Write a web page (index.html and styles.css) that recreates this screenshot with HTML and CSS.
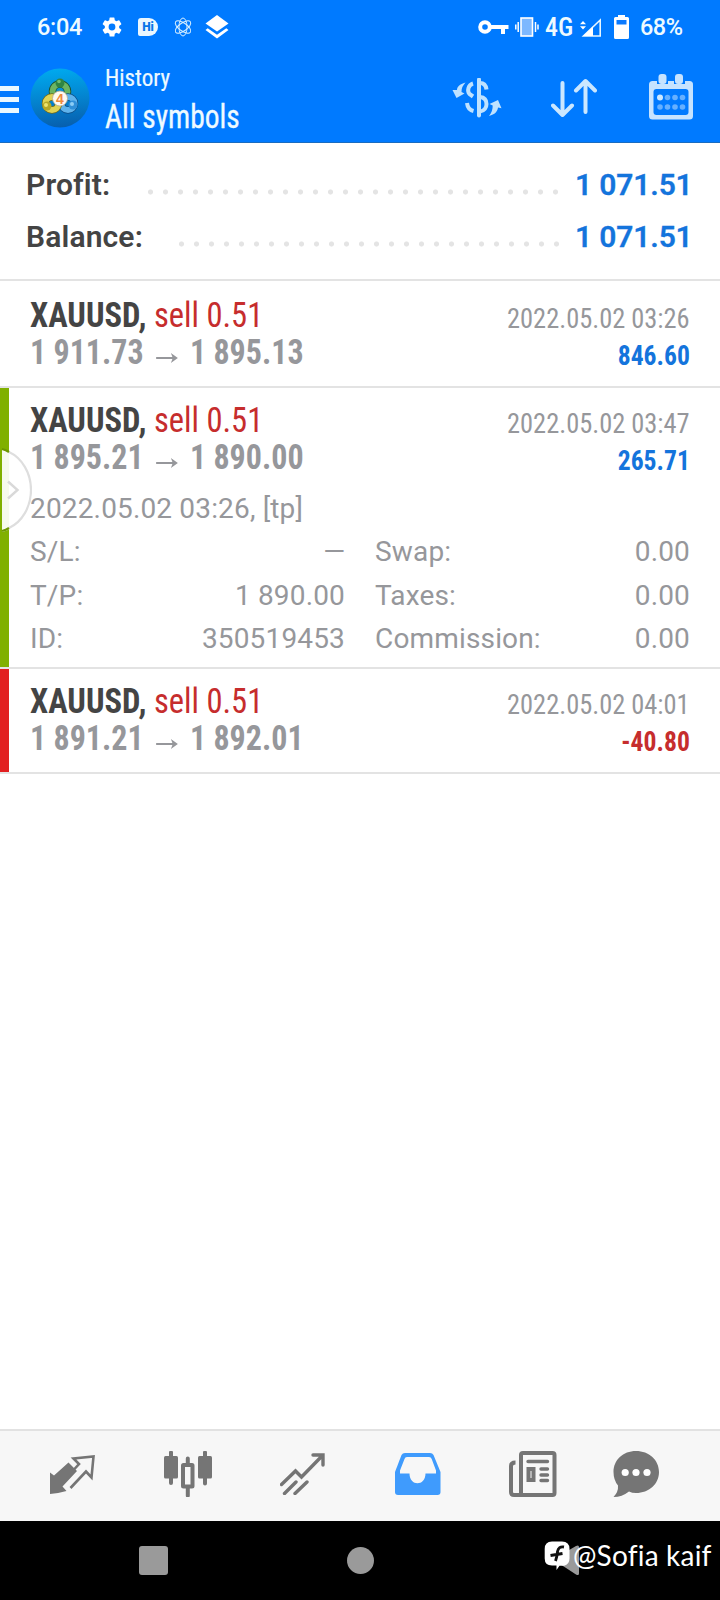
FILE: index.html
```html
<!DOCTYPE html>
<html lang="en">
<head>
<meta charset="utf-8">
<title>History</title>
<link rel="stylesheet" href="styles.css">
</head>
<body>
<div class="screen">
  <header class="top">
    <div class="status">
      <span class="clock">6:04</span>
      <svg class="st-gear" width="20" height="20" viewBox="2 2 20 20" fill="#fff"><path d="M19.14 12.94c.04-.3.06-.61.06-.94s-.02-.64-.07-.94l2.03-1.58a.49.49 0 0 0 .12-.61l-1.92-3.32a.49.49 0 0 0-.59-.22l-2.39.96a7 7 0 0 0-1.62-.94l-.36-2.54A.48.48 0 0 0 13.92 2.400h-3.84a.48.48 0 0 0-.48.41l-.36 2.54a7 7 0 0 0-1.62.94l-2.39-.96a.48.48 0 0 0-.59.22L2.740 8.870a.48.48 0 0 0 .12.61l2.03 1.580a6 6 0 0 0 0 1.880L2.860 14.520a.49.49 0 0 0-.12.61l1.920 3.320c.12.22.37.29.59.22l2.390-.96c.5.38 1.030.7 1.620.940l.36 2.540c.05.24.24.41.480.410h3.840c.24 0 .44-.17.47-.41l.36-2.540a7 7 0 0 0 1.620-.940l2.390.960c.22.08.47 0 .59-.22l1.920-3.320a.48.48 0 0 0-.12-.61zM12 15.400a3.400 3.400 0 1 1 0-6.800 3.400 3.400 0 0 1 0 6.800z"/></svg>
      <span class="st-hi">Hi</span>
      <svg class="st-atom" width="18" height="20" viewBox="0 0 18 20" fill="none" stroke="#d8f0ff" stroke-width="1"><ellipse cx="9" cy="10" rx="4" ry="9"/><ellipse cx="9" cy="10" rx="4" ry="9" transform="rotate(55 9 10)"/><ellipse cx="9" cy="10" rx="4" ry="9" transform="rotate(-55 9 10)"/></svg>
      <svg class="st-layers" width="24" height="24" viewBox="0 0 24 24" fill="#fff"><path d="M12 0 23.500 8.500 12 16.500.5 8.500z"/><path d="M2.700 13.300 12 19.700l9.300-6.400 2.200 1.700L12 23.500.5 15z"/></svg>
      <svg class="st-key" width="31" height="15" viewBox="0 0 31 15"><circle cx="7" cy="7" r="4.800" fill="none" stroke="#fff" stroke-width="4"/><path d="M12 5h18.500v4H27v5h-4V9H12z" fill="#fff"/></svg>
      <svg class="st-vib" width="24" height="20" viewBox="0 0 24 20"><rect x="6" y="1" width="11.500" height="18" fill="#7db8ff" stroke="#fff" stroke-width="1.600"/><path d="M3.200 5v10M.8 7.500v5M20.500 5v10M23 7.500v5" stroke="#fff" stroke-width="1.500"/></svg>
      <span class="net">4G</span>
      <svg class="st-sig" width="22" height="19" viewBox="0 0 22 19"><path d="M20.200 2v16H3.500z" fill="none" stroke="#e8f7ff" stroke-width="1.600"/><path d="M13 8.500V18H3z" fill="#fff"/><path d="M0 6.300 3 3l3 3.300zM0 8.300l3 3.300 3-3.300z" fill="#fff"/></svg>
      <svg class="st-bat" width="15" height="24" viewBox="0 0 15 24"><path d="M4 0h7v2h2.500Q15 2 15 3.500v19q0 1.500-1.500 1.500h-12Q0 24 0 22.500v-19Q0 2 1.500 2H4z" fill="#fff"/><path d="M2.500 5h10v4.500h-10z" fill="#0a7aff"/></svg>
      <span class="pct">68%</span>
    </div>
    <div class="appbar">
      <div class="burger"><i></i><i></i><i></i></div>
      <svg class="logo" width="60" height="60" viewBox="0 0 60 60">
        <defs>
          <linearGradient id="bg" x1=".5" y1="0" x2=".6" y2="1"><stop offset="0" stop-color="#00a9ee"/><stop offset=".55" stop-color="#0481cd"/><stop offset="1" stop-color="#075ead"/></linearGradient>
        </defs>
        <circle cx="30" cy="30" r="29.500" fill="url(#bg)"/>
        <g fill="none">
          <circle cx="30" cy="23.500" r="7.500" stroke="#1d4f2a" stroke-width="7.500"/><circle cx="30" cy="23.500" r="7.500" stroke="#6cb562" stroke-width="6"/>
          <circle cx="38" cy="35.500" r="6.500" stroke="#0b4c86" stroke-width="7.500"/><circle cx="38" cy="35.500" r="6.500" stroke="#5fb3ec" stroke-width="6"/>
          <circle cx="22" cy="35.500" r="6.500" stroke="#716a1c" stroke-width="7.500"/><circle cx="22" cy="35.500" r="6.500" stroke="#e0d355" stroke-width="6"/>
        </g>
        <circle cx="30" cy="15" r="4.500" fill="#2f8544"/><circle cx="29" cy="13.500" r="1.800" fill="#73bd71"/>
        <circle cx="17" cy="38" r="4.500" fill="#b7a827"/><circle cx="16" cy="37" r="2" fill="#efe36c"/>
        <circle cx="43" cy="37" r="4.500" fill="#2f8fd8"/><circle cx="42" cy="36" r="2" fill="#8ccdf5"/>
        <circle cx="30" cy="30.500" r="7.500" fill="#fffaf2" stroke="#b5a98e" stroke-width=".8"/>
        <text x="30" y="35.500" text-anchor="middle" class="logo-num">4</text>
      </svg>
      <div class="titles"><div class="t1">History</div><div class="t2">All symbols</div></div>
      <svg class="ic-dollar" width="50" height="40" viewBox="0 0 50 40" fill="none" stroke="#bfe2ff" stroke-width="4">
        <path d="M27 1.500v36" stroke-width="4" stroke-linecap="round"/>
        <path d="M21 5.500C16 7 15 13 17.500 16L21 18.500" />
        <path d="M28 5c3.500 0 6 2.500 6.500 6.500"/>
        <path d="M15 25c.5 4.500 2.500 7 6.500 8"/>
        <path d="M28 19c5 .5 6.500 3.500 6.500 7s-2 7-6.500 7.500"/>
        <path d="M13.500 4.500C7.500 6 5 9 5 12H.5l4 8 8-4.500-3-1.500c0-4 1-6 4-9.500z" fill="#bfe2ff" stroke="none"/>
        <path d="M37 38c6-1.500 8.500-4.500 9-8.500l3.500.8L46 22l-8.500 4 3.200 1.500c0 4-1 7-3.700 10.500z" fill="#bfe2ff" stroke="none"/>
      </svg>
      <svg class="ic-sort" width="46" height="40" viewBox="0 0 46 40" fill="none" stroke="#cbe7ff" stroke-width="4" stroke-linecap="round" stroke-linejoin="round"><path d="M11.500 5v32M2 27.500 11.500 37 21 27.500M34.500 34V3M25 12.500 34.500 3 44 12.500"/></svg>
      <svg class="ic-cal" width="44" height="46" viewBox="0 0 44 46"><rect y="7" width="44" height="38.500" rx="3.500" fill="#c6e3ff"/><path d="M8 0h11v10H8zM25 0h11v10H25z" fill="#007aff"/><rect x="9.500" y="0" width="8" height="10" rx="3" fill="#c6e3ff"/><rect x="26" y="0" width="8" height="10" rx="3" fill="#c6e3ff"/><rect x="4.500" y="15" width="35" height="26" rx="3" fill="#007aff"/><circle cx="11" cy="23.500" r="3" fill="#cde8ff"/><g fill="#66b0ff"><circle cx="18.500" cy="23.500" r="2.800"/><circle cx="26" cy="23.500" r="2.800"/><circle cx="33.500" cy="23.500" r="2.800"/><circle cx="11" cy="33" r="2.800"/><circle cx="18.500" cy="33" r="2.800"/><circle cx="26" cy="33" r="2.800"/><circle cx="33.500" cy="33" r="2.800"/></g></svg>
    </div>
  </header>

  <section class="summary">
    <div class="sum-row"><span>Profit:</span><i class="dots dots-profit"></i><b>1 071.51</b></div>
    <div class="sum-row"><span>Balance:</span><i class="dots dots-balance"></i><b>1 071.51</b></div>
  </section>

  <main class="deals">
    <article class="deal first">
      <div class="line"><div class="sym"><b>XAUUSD,</b> <span>sell 0.51</span></div><div class="date">2022.05.02 03:26</div></div>
      <div class="line"><div class="price">1 911.73 <svg width="24" height="12" viewBox="0 0 24 12"><path d="M0 6h21" fill="none" stroke="#96979b" stroke-width="2"/><path d="M16 1 23.500 6 16 11l2-5z" fill="#96979b"/></svg> 1 895.13</div><div class="res">846.60</div></div>
    </article>
    <article class="deal tp">
      <div class="line"><div class="sym"><b>XAUUSD,</b> <span>sell 0.51</span></div><div class="date">2022.05.02 03:47</div></div>
      <div class="line"><div class="price">1 895.21 <svg width="24" height="12" viewBox="0 0 24 12"><path d="M0 6h21" fill="none" stroke="#96979b" stroke-width="2"/><path d="M16 1 23.500 6 16 11l2-5z" fill="#96979b"/></svg> 1 890.00</div><div class="res">265.71</div></div>
      <div class="details">
        <div class="opened">2022.05.02 03:26, [tp]</div>
        <div class="kv"><span>S/L:</span><span class="dash">—</span></div><div class="kv"><span>Swap:</span><span>0.00</span></div>
        <div class="kv"><span>T/P:</span><span>1 890.00</span></div><div class="kv"><span>Taxes:</span><span>0.00</span></div>
        <div class="kv"><span>ID:</span><span>350519453</span></div><div class="kv"><span>Commission:</span><span>0.00</span></div>
      </div>
      <svg class="handle" width="32" height="90" viewBox="0 0 32 90"><path d="M2 2C19 6 31 24 31 43S19 81 2 85" fill="#fff" fill-opacity=".93"/><path d="M9 5C22 11 31 26 31 43S22 75 9 81" fill="none" stroke="#dedede" stroke-width="2.200"/><path d="M2 2q4 1 7 3M2 84q4-1 7-3" fill="none" stroke="#6c9700" stroke-width="2.200"/><path d="M8 34.500l9.500 8.500L8 51.500" fill="none" stroke="#d9d9d9" stroke-width="2.400"/></svg>
    </article>
    <article class="deal sl">
      <div class="line"><div class="sym"><b>XAUUSD,</b> <span>sell 0.51</span></div><div class="date">2022.05.02 04:01</div></div>
      <div class="line"><div class="price">1 891.21 <svg width="24" height="12" viewBox="0 0 24 12"><path d="M0 6h21" fill="none" stroke="#96979b" stroke-width="2"/><path d="M16 1 23.500 6 16 11l2-5z" fill="#96979b"/></svg> 1 892.01</div><div class="res neg">-40.80</div></div>
    </article>
  </main>

  <nav class="tabs">
    <svg width="46" height="40" viewBox="0 0 46 40"><path d="M1 17.500 5 20.500 19.500 7.500 28 16 13.500 31.500l4 4.500Q9 38.500 1 39z" fill="#757575"/><path d="M25 14.500l5-5.500-5.500-5.500L44.500 1.500 42.500 22.500 37 16.500 21.500 33" fill="none" stroke="#757575" stroke-width="2.600"/></svg>
    <svg width="48" height="46" viewBox="0 0 48 46" fill="#757575"><rect y="5" width="14" height="22.500" rx="1.500"/><rect x="34" y="5" width="14" height="22.500" rx="1.500"/><path d="M7 1.500V32M41 1.500V32.500M23.800 7.500V14M23.800 36v8.500" stroke="#757575" stroke-width="4" stroke-linecap="round"/><rect x="19" y="14" width="9.500" height="21.500" rx=".5" fill="#f7f7f7" stroke="#757575" stroke-width="4"/></svg>
    <svg width="45" height="42" viewBox="0 0 45 42" fill="none" stroke="#757575" stroke-width="3.400"><path d="M1.500 31.500 15.500 18l6 6L42 3M33 2h10v10" stroke-linecap="round"/><path d="M4.500 40.500 16 29M15 40.500 27 29" stroke-linecap="round"/></svg>
    <svg width="46" height="42" viewBox="0 0 46 42"><path d="M10 0h25q2.500 0 3.500 2l7 17v20q0 3-3 3H3q-3 0-3-3V19L6.500 2Q7.500 0 10 0z" fill="#3f9bfd"/><path d="M12 4h22q2 0 2.700 2L41 17.500v3H30.500C30.500 33.500 14.500 33.500 14.500 20.500H5v-3L9.500 6Q10 4 12 4z" fill="#f7f7f7"/></svg>
    <svg width="48" height="46" viewBox="0 0 48 46" fill="none" stroke="#757575" stroke-width="4"><rect x="12" y="2" width="33.500" height="42" rx="2"/><path d="M6.500 11.500Q2 11.500 2 15V41q0 3 3 3h10" /><path d="M19 10.500h19.500M32 18h6.500M32 24h6.500M32 29.500h6.500" stroke-width="3.400" stroke-linecap="round"/><rect x="19.500" y="18" width="5" height="11"/></svg>
    <svg width="46" height="46" viewBox="0 0 46 46"><path d="M23 0C36 0 46 9 46 21S36 42 23 42q-4 0-7-1.500Q9 46 .5 46q5-5 4.500-11.500Q.5 29 .5 21C.5 9 10 0 23 0z" fill="#757575"/><g fill="#fff"><circle cx="12.200" cy="21.500" r="3.600"/><circle cx="23" cy="21.500" r="3.600"/><circle cx="34" cy="21.500" r="3.600"/></g></svg>
  </nav>
  <footer class="sys">
    <i class="sq"></i><i class="ci"></i>
    <svg class="back" width="27" height="31" viewBox="0 0 27 31"><path d="M1 14.500 24 1q3-1.500 3 1v26.500q0 2.500-3 1z" fill="#9a9a9a"/></svg>
    <div class="mark">
      <svg width="26" height="29" viewBox="0 0 26 29"><path d="M8 .5h10q7.500 0 7.500 7.500v9.500q0 6-5.500 7.300h-4.500L12.500 29v-4.500H8Q.7 24.500.7 17.500V8Q.7.500 8 .5z" fill="#fff"/><path d="M20 6q-5.500-1-6.500 4.500Q13 16 11.500 20M6.500 14.500l12-2" fill="none" stroke="#111" stroke-width="2.800"/></svg><span>@Sofia kaif</span>
    </div>
  </footer>
</div>
</body>
</html>
```

FILE: styles.css
```css
* { box-sizing: border-box; }
body { margin: 0; background: #fff; font-family: Roboto, sans-serif; }
svg { display: block; flex: none; }
.screen { width: 720px; height: 1600px; display: flex; flex-direction: column; overflow: hidden; }

.top { height: 143px; background: #007aff; border-bottom: 1px solid #1a6cc0; color: #eefaff; flex: none; }
.status { height: 54px; display: flex; align-items: center; padding-left: 37px; font-weight: 500; font-size: 23.5px; }
.clock { width: 65px; letter-spacing: -.3px; }
.st-hi { width: 20px; height: 18px; margin-left: 16px; border-radius: 3px 9px 9px 2px; background: #eaf7ff; color: #0876e8; font-size: 12px; line-height: 18px; font-weight: 900; text-align: center; }
.st-atom { margin-left: 16px; }
.st-layers { margin-left: 13px; }
.st-key { margin-left: 249px; }
.st-vib { margin-left: 6px; }
.net { width: 28px; margin-left: 6px; font-family: "Roboto Condensed", sans-serif; font-size: 26px; font-weight: 500; }
.st-sig { margin-left: 7px; }
.st-bat { margin-left: 12px; }
.pct { margin-left: 11px; letter-spacing: -.5px; }

.appbar { height: 88px; display: flex; align-items: center; font-family: "Roboto Condensed", sans-serif; }
.burger { width: 19px; display: flex; flex-direction: column; gap: 6px; padding-top: 2px; }
.burger i { height: 5px; background: #eaf8ff; }
.logo { margin-left: 11px; }
.logo-num { font: 700 14px "Liberation Sans", sans-serif; fill: #f08a3c; }
.titles { width: 347px; margin-left: 15px; white-space: nowrap; }
.t1, .t2, .sym, .price { transform-origin: 0 50%; }
.date, .res { transform-origin: 100% 50%; }
.t1 { font-size: 24px; line-height: 34px; transform: scaleX(.96); -webkit-text-stroke: .2px; }
.t2 { font-size: 34px; line-height: 40px; transform: translateY(1px) scaleX(.867); -webkit-text-stroke: .3px; }
.ic-sort { margin-left: 49px; }
.ic-cal { margin-left: 52px; margin-top: -2px; }

.summary { height: 138px; padding: 16px 30px 0 26px; border-bottom: 2px solid #e3e3e3; flex: none; }
.sum-row { height: 52px; line-height: 51px; display: flex; font-size: 30px; font-weight: 600; color: #444; letter-spacing: .15px; }
.sum-row b { width: 115px; color: #1474dc; font-weight: 600; text-align: right; white-space: nowrap; letter-spacing: -.15px; -webkit-text-stroke: .3px; }
.dots { height: 6px; margin: 30px 0 0 auto; background: radial-gradient(circle at 50% 50%, #e4e4e4 2.200px, transparent 2.900px) 0 0 / 15px 6px; }
.dots-profit { width: 420px; margin-right: 12px; }
.dots-balance { width: 390px; margin-right: 11px; }

.deals { flex: 1; font-family: "Roboto Condensed", sans-serif; }
.deal { position: relative; padding: 14px 30px 0; border-bottom: 2px solid #e3e3e3; }
.deal.first { height: 107px; padding-top: 16px; }
.deal.tp { height: 281px; }
.deal.sl { height: 105px; }
.deal.tp::before, .deal.sl::before { content: ""; position: absolute; left: 0; top: 0; bottom: 0; width: 9px; background: #80b000; }
.deal.sl::before { background: #e21f20; }
.line { height: 37px; line-height: 37px; display: flex; justify-content: space-between; align-items: baseline; white-space: nowrap; }
.sym { font-size: 34.5px; color: #444; transform: scaleX(.943); }
.sym span { color: #c62d2d; }
.price { font-size: 34.5px; font-weight: 700; color: #96979b; transform: scaleX(.927); }
.price svg { display: inline-block; margin: 0 5px; vertical-align: 0; }
.date { font-size: 28px; color: #96979b; transform: translateY(1px) scaleX(.943); }
.res { font-size: 28px; font-weight: 700; color: #1474dc; transform: translateY(1px) scaleX(.915); }
.res.neg { color: #c62d2d; }
.details { margin-top: 11px; display: grid; grid-template-columns: 315px 315px; column-gap: 30px; font-family: Roboto, sans-serif; font-size: 28px; line-height: 43.300px; letter-spacing: .16px; color: #96979b; }
.opened { grid-column: 1 / 3; }
.kv { display: flex; justify-content: space-between; }
.dash { font-size: 28px; letter-spacing: 0; }
.handle { position: absolute; left: 0; top: 59px; }

.tabs { height: 92px; flex: none; display: flex; align-items: center; padding: 0 0 4px 49px; background: #f7f7f7; border-top: 2px solid #e2e2e2; }
.tabs svg:nth-child(1) { margin-top: 2px; }
.tabs svg:nth-child(2) { margin-left: 69px; }
.tabs svg:nth-child(3) { margin-left: 68px; }
.tabs svg:nth-child(4) { margin-left: 70px; margin-top: -1px; }
.tabs svg:nth-child(5) { margin-left: 68px; }
.tabs svg:nth-child(6) { margin-left: 56px; }
.sys { position: relative; height: 79px; flex: none; background: #000; display: flex; align-items: center; padding-left: 139px; }
.sq { width: 29px; height: 29px; background: #9a9a9a; border-radius: 3px; }
.ci { width: 27px; height: 27px; margin-left: 179px; background: #9a9a9a; border-radius: 50%; }
.back { margin-left: 178px; }
.mark { position: absolute; left: 544px; top: 18px; display: flex; align-items: center; gap: 3px; color: #fff; font-family: Lato, sans-serif; font-size: 28px; line-height: 32px; letter-spacing: .2px; font-variant-ligatures: none; white-space: nowrap; }
```
